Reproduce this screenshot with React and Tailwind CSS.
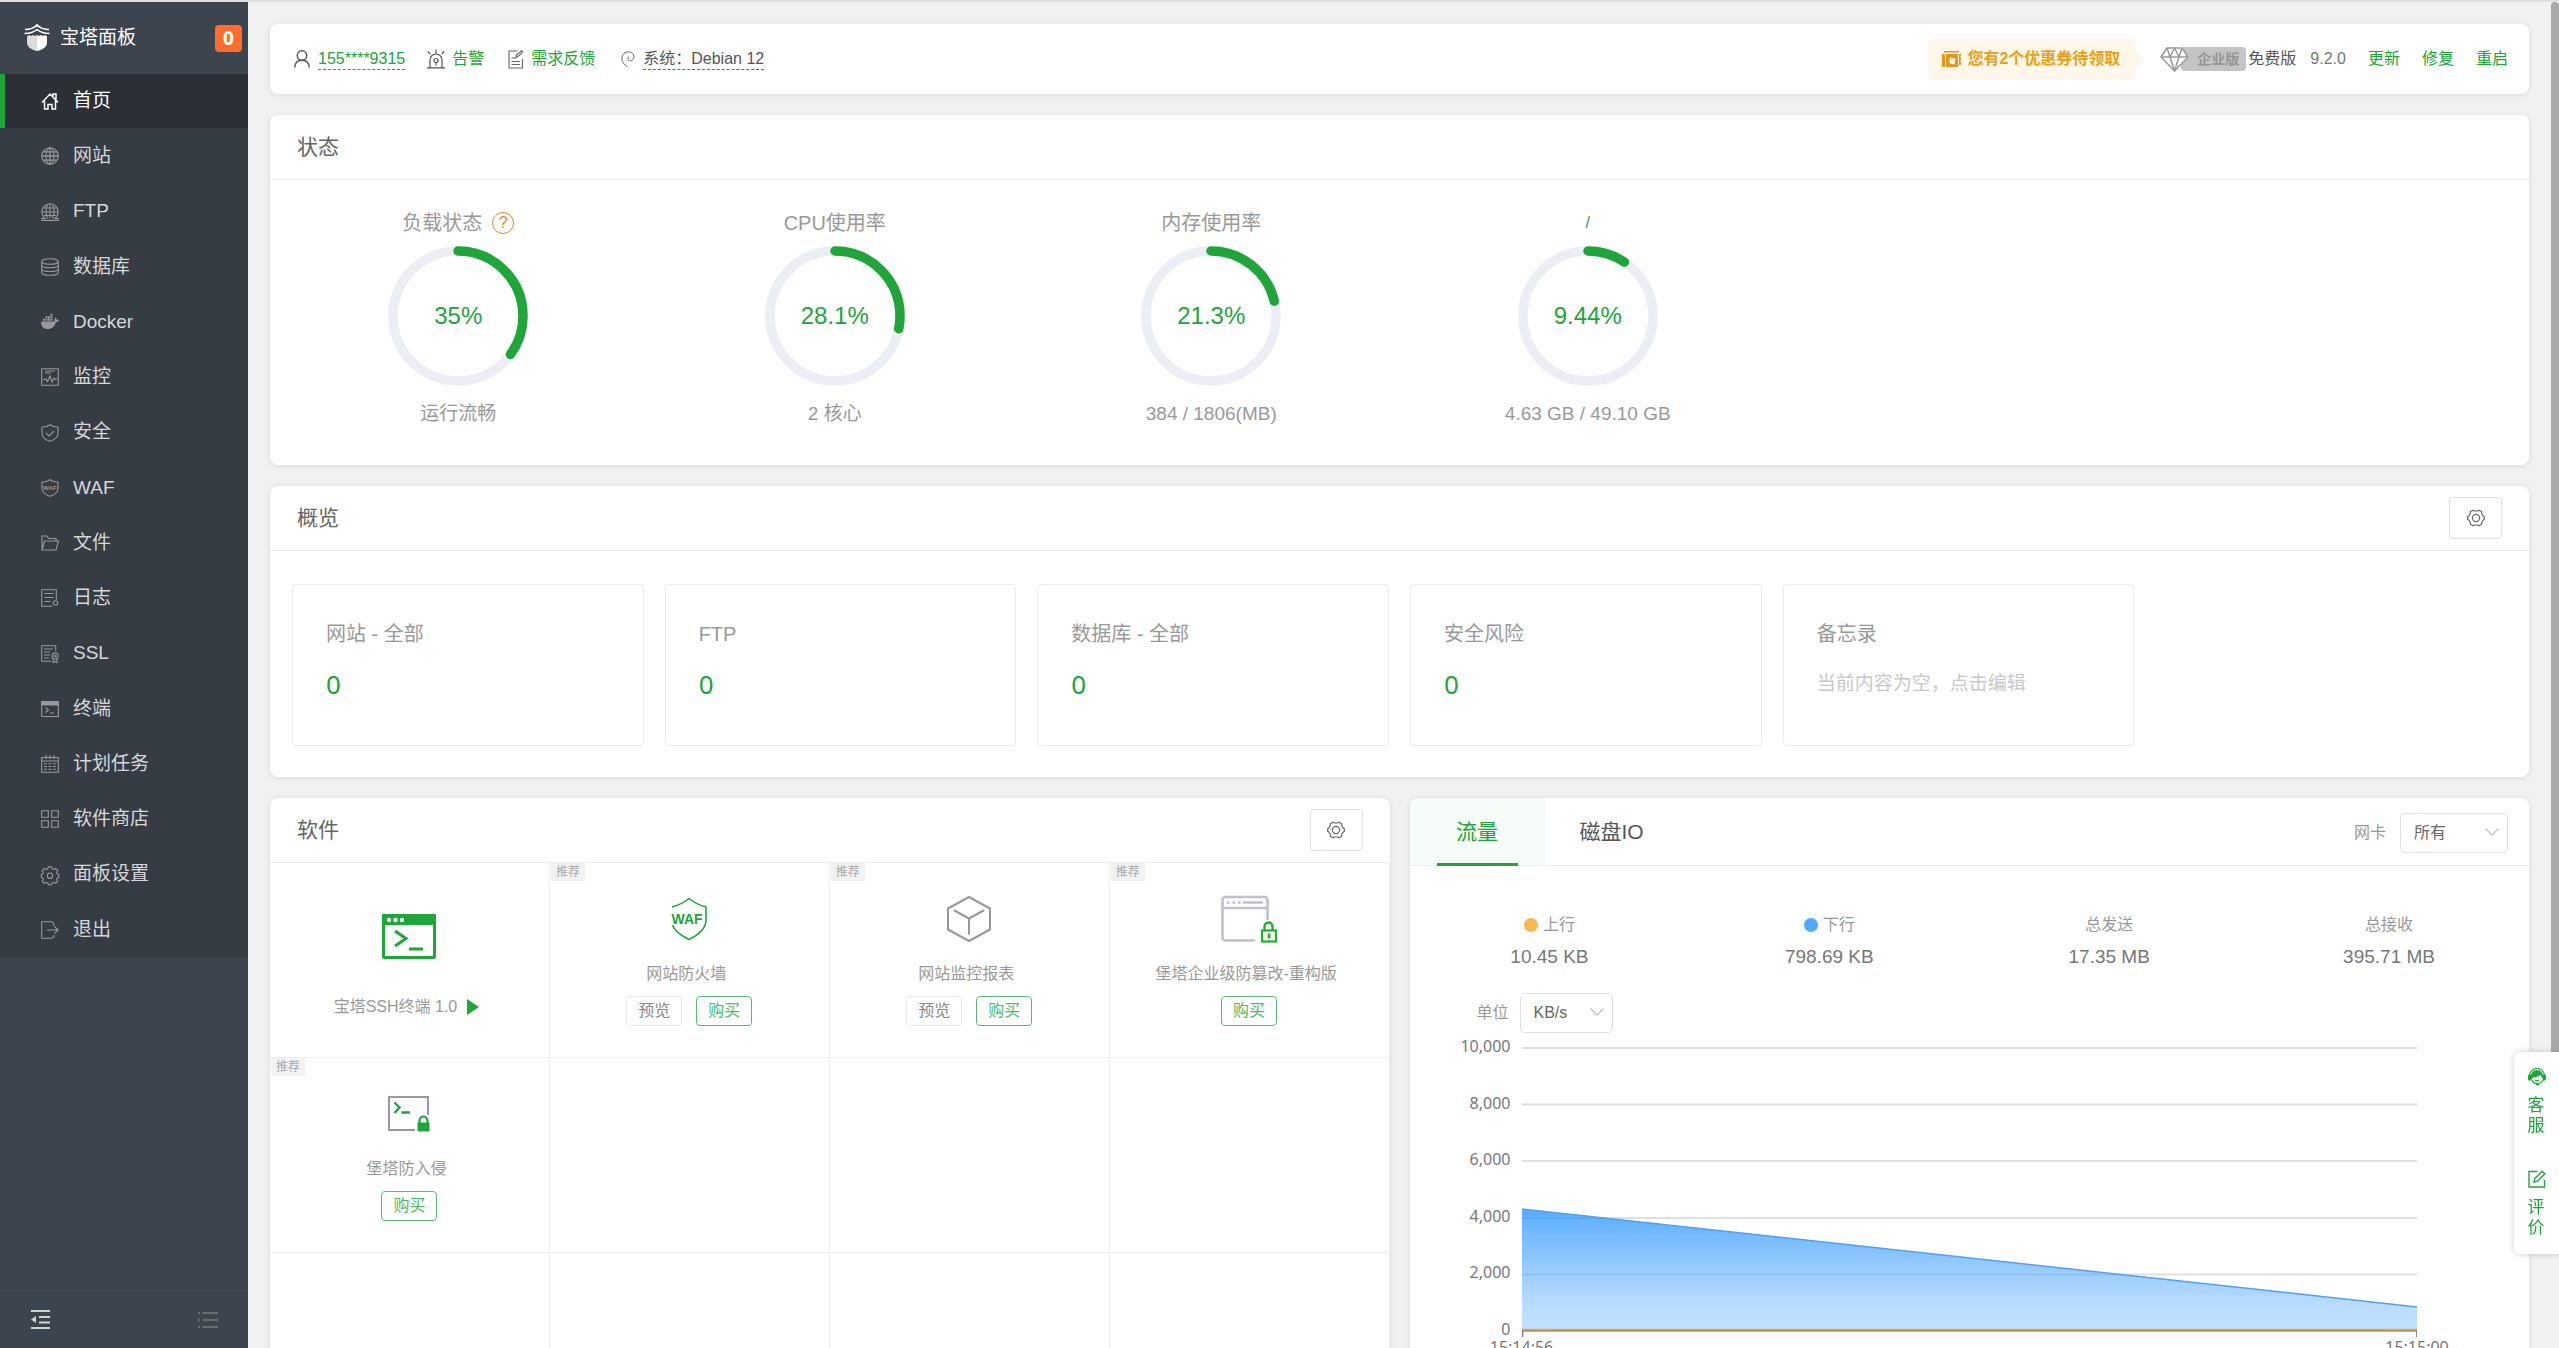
import React, { useState } from 'react';

const menuItems = [
  { key: 'home', label: '首页' },
  { key: 'site', label: '网站' },
  { key: 'ftp', label: 'FTP' },
  { key: 'database', label: '数据库' },
  { key: 'docker', label: 'Docker' },
  { key: 'monitor', label: '监控' },
  { key: 'security', label: '安全' },
  { key: 'waf', label: 'WAF' },
  { key: 'files', label: '文件' },
  { key: 'logs', label: '日志' },
  { key: 'ssl', label: 'SSL' },
  { key: 'terminal', label: '终端' },
  { key: 'crontab', label: '计划任务' },
  { key: 'store', label: '软件商店' },
  { key: 'config', label: '面板设置' },
  { key: 'exit', label: '退出' },
];

const gauges = [
  { title: '负载状态', value: 35, text: '35%', desc: '运行流畅', help: true },
  { title: 'CPU使用率', value: 28.1, text: '28.1%', desc: '2 核心' },
  { title: '内存使用率', value: 21.3, text: '21.3%', desc: '384 / 1806(MB)' },
  { title: '/', value: 9.44, text: '9.44%', desc: '4.63 GB / 49.10 GB', green: true },
];

const overview = [
  { title: '网站 - 全部', count: 0 },
  { title: 'FTP', count: 0 },
  { title: '数据库 - 全部', count: 0 },
  { title: '安全风险', count: 0 },
  { title: '备忘录', memo: '当前内容为空，点击编辑' },
];

const software = [
  { name: '宝塔SSH终端 1.0', icon: 'ssh', running: true },
  { name: '网站防火墙', icon: 'waf', badge: true, preview: true, buy: true },
  { name: '网站监控报表', icon: 'cube', badge: true, preview: true, buy: true },
  { name: '堡塔企业级防篡改-重构版', icon: 'tamper', badge: true, buy: true },
  { name: '堡塔防入侵', icon: 'intrusion', badge: true, buy: true },
];

const traffic = [
  { label: '上行', value: '10.45 KB', dot: 'bg-[#f7b851]' },
  { label: '下行', value: '798.69 KB', dot: 'bg-[#52a9ff]' },
  { label: '总发送', value: '17.35 MB' },
  { label: '总接收', value: '395.71 MB' },
];

const yLabels = ['10,000', '8,000', '6,000', '4,000', '2,000', '0'];

const menuPaths = {
  home: (
    <path d="M1 10.500 9 2l8 8.500M3.500 8.500V17H7v-4.500h4V17h3.500V8.500M12 4.500V2h3v5.500" strokeWidth="1.500" />
  ),
  site: (
    <>
      <circle cx="9" cy="9" r="8.300" />
      <ellipse cx="9" cy="9" rx="4" ry="8.300" />
      <path d="M9 .7v16.600M.7 9h16.600M2 4.800h14M2 13.200h14" strokeWidth="1.300" />
    </>
  ),
  ftp: (
    <>
      <path d="M4 15.500a8.200 8.200 0 1 1 10 0" />
      <path d="M6.500 15.200c-2-4-2-10 0-13.600M11.500 15.200c2-4 2-10 0-13.600M9 1v14M1 9h16M2.500 5h13M2.500 12.500h13M0 15.500h5M13 15.500h5M0 17.400h18" />
    </>
  ),
  database: (
    <>
      <ellipse cx="9" cy="3.500" rx="8.300" ry="2.800" />
      <path d="M.7 3.500v11c0 1.500 3.700 2.800 8.300 2.800s8.300-1.300 8.300-2.800v-11M.7 7c0 1.600 3.700 2.800 8.300 2.800S17.300 8.600 17.300 7M.7 10.700c0 1.600 3.700 2.800 8.300 2.800s8.300-1.200 8.300-2.800" />
    </>
  ),
  docker: (
    <path
      d="M0 8.500h12.500c.8 0 1.300-.6 1.200-1.500-.2-1 .1-1.800.7-2.500.8.6 1.200 1.300 1.200 2.200.8-.2 1.700 0 2.400.5-.5 1.200-1.500 1.800-3 1.800-1.300 4.500-4 7-8.500 7C2 16 0 13 0 8.500ZM2 5.800h2v2H2zM4.500 5.800h2v2h-2zM7 5.800h2v2H7zM9.500 5.800h2v2h-2zM4.500 3.300h2v2h-2zM7 3.300h2v2H7zM9.500.8h2v2h-2zM9.500 3.300h2v2h-2z"
      fill="currentColor"
      stroke="none"
    />
  ),
  monitor: (
    <path d="M.7.7h16.600v16.600H.7zM4 3h10M4 5h6M2 12l3-1 1.500 2.500L9 8l2 6 2-4 1 1.500 2-1" />
  ),
  security: (
    <path d="M9 .7C6.500 2.400 4 3 1 3.200V9c0 4 3 6.800 8 8.300 5-1.500 8-4.300 8-8.300V3.200C14 3 11.500 2.400 9 .7ZM5 9l3 3 5-5" />
  ),
  waf: (
    <>
      <path d="M9 .7C6.500 2.400 4 3 1 3.200V9c0 4 3 6.800 8 8.300 5-1.500 8-4.300 8-8.300V3.200C14 3 11.500 2.400 9 .7Z" />
      <text x="9" y="11" textAnchor="middle" fontSize="6" fontWeight="bold" fill="currentColor" stroke="none">
        WAF
      </text>
    </>
  ),
  files: <path d="M1 16V2h5l1.500 2.500H15V7M1 16 3.500 7h14L15 16Z" />,
  logs: (
    <>
      <path d="M11 17.300H.7V.7h14.600V11M3.500 4.500h9M3.500 8.500h9M3.500 12.500h6" />
      <circle cx="14.500" cy="14" r="2.200" />
    </>
  ),
  ssl: (
    <>
      <path d="M10 16.300H.7V.7h14V6M3 4h9M3 7h6M3 10h6M3 13h5M12 13.500V17.500l2-1 2 1v-4" />
      <circle cx="14" cy="11" r="3.200" />
      <circle cx="14" cy="11" r="1.200" />
    </>
  ),
  terminal: (
    <>
      <path d="M.7 1.500h16.600v15H.7zM4.500 7.500l3 2.500-3 2.500M9 13h4" />
      <path d="M.7 1.500h16.600v3.500H.7z" fill="currentColor" />
    </>
  ),
  crontab: (
    <path d="M.7 2.500h16.600v14.800H.7zM.7 6h16.600M5 0v4M9 0v4M13 0v4M3 8.800h3M7.500 8.800h3M12 8.800h3M3 11.500h3M7.500 11.500h3M12 11.500h3M3 14.300h3M7.500 14.300h3M12 14.300h3" />
  ),
  store: <path d="M.7.7h6.600v6.600H.7zM10.700.7h6.600v6.600h-6.600zM.7 10.700h6.600v6.600H.7zM10.700 10.700h6.600v6.600h-6.600z" />,
  config: (
    <>
      <path d="M7.400.8h3.200l.5 2 1.600.7 1.900-1.100 2.200 2.200-1.100 1.900.7 1.600 1.500.4v2.800l-1.500.4-.7 1.600 1.100 1.900-2.200 2.200-1.900-1.100-1.600.7-.5 1.700H7.400l-.5-1.700-1.600-.7-1.900 1.100-2.200-2.200 1.100-1.900-.7-1.600L.3 11.300V8.500l1.300-.4.700-1.600-1.100-1.900 2.200-2.200 1.900 1.100 1.600-.7Z" />
      <circle cx="9" cy="9.700" r="2.700" />
    </>
  ),
  exit: <path d="M13 5V3L11 .7H.7v16.600H11l2-1.500V14M6 9h11M13.500 5.500 17 9l-3.500 3.500" />,
};

const MenuIcon = ({ name }) => (
  <svg viewBox="0 0 18 18" className="h-[18px] w-[18px] shrink-0 overflow-visible" fill="none" stroke="currentColor" strokeWidth="1.100">
    {menuPaths[name]}
  </svg>
);

const Logo = () => (
  <svg viewBox="0 0 26 28" className="h-7 w-[26px]">
    <path d="M3 12.500 5 11l2 1 2-1 2 1 2-1v16C7 25.500 3 23 3 18.500Z" fill="#dcdcdc" />
    <path d="M23 12.500 21 11l-2 1-2-1-2 1-2-1v16c6-1.500 10-4 10-8.500Z" fill="#fff" />
    <path d="M1 5.500c5 0 9-1.500 12-4.500 3 3 7 4.500 12 4.500M.5 9.500c5.500 0 9.500-1.500 12.500-4 3 2.500 7 4 12.500 4M13 0v3" stroke="#fff" strokeWidth="1.600" fill="none" />
  </svg>
);

const GearIcon = () => (
  <svg viewBox="0 0 18 18" className="h-[18px] w-[18px]" fill="none" stroke="#666" strokeWidth="1.200" strokeLinejoin="round">
    <path d="M6 1.200 7.500 2h3l1.500-.8L14.500 2.500l.2 2 1.300 2.300 1.300.9v2.600l-1.300.9-1.300 2.300-.2 2-2.500 1.300-1.500-.8h-3l-1.500.8-2.500-1.300-.2-2L2 11.200l-1.300-.9V7.700L2 6.800l1.300-2.300.2-2Z" />
    <circle cx="9" cy="9" r="3.600" />
  </svg>
);

const SoftIcon = ({ name }) => {
  if (name === 'ssh') {
    return (
      <svg viewBox="0 0 54 45" className="h-[45px] w-[54px]">
        <rect x="1.500" y="1.500" width="51" height="42" rx="1" fill="#fff" stroke="#20a53a" strokeWidth="3" />
        <rect width="54" height="11" rx="1" fill="#20a53a" />
        <g fill="#fff">
          <circle cx="7" cy="6" r="2.200" />
          <circle cx="13.500" cy="6" r="2.200" />
          <circle cx="20" cy="6" r="2.200" />
        </g>
        <path d="m13 17 11 7.500L13 32M27 35h14" stroke="#20a53a" strokeWidth="3" fill="none" />
      </svg>
    );
  }
  if (name === 'waf') {
    return (
      <svg viewBox="0 0 38 44" className="h-11 w-[38px]" fill="none" stroke="#20a53a" strokeWidth="1.600">
        <path d="M2 10C8 8.500 14 5.500 19 1.500c5 4 11 7 17 8.500v13c0 8-8 15-17 19.500C11 38.500 4 33 2.500 28" />
        <text x="17" y="27" textAnchor="middle" fontSize="14" fontWeight="bold" fill="#20a53a" stroke="none">
          WAF
        </text>
      </svg>
    );
  }
  if (name === 'cube') {
    return (
      <svg viewBox="0 0 44 46" className="h-[46px] w-11" fill="none" stroke="#999" strokeWidth="2" strokeLinejoin="round" strokeLinecap="round">
        <path d="m22 1 21 11.500v21L22 45 1 33.500v-21ZM7.500 14.500 22 22.500l14.500-8M22 22.500V38" />
      </svg>
    );
  }
  if (name === 'tamper') {
    return (
      <svg viewBox="0 0 56 48" className="h-12 w-14" fill="none" stroke="#c1c0cd" strokeWidth="2.600">
        <path d="M34 45.500H4.500a3 3 0 0 1-3-3V5a3 3 0 0 1 3-3h39a3 3 0 0 1 3 3v20M1.500 13h45" />
        <path d="M6 7.500h2.500M11.500 7.500H14M17 7.500h2.500M22 7.500h20" />
        <path d="M43.500 35v-3.500a4 4 0 0 1 8 0V35" stroke="#1eb32b" strokeWidth="2.400" />
        <rect x="41" y="35.500" width="14" height="11" fill="#fff" stroke="#1eb32b" strokeWidth="2.200" />
        <path d="M48 38.500v5" stroke="#1eb32b" />
      </svg>
    );
  }
  return (
    <svg viewBox="0 0 42 36" className="h-9 w-[42px]" fill="none" stroke="#999" strokeWidth="2">
      <path d="M27 34H1V1h39v18" />
      <path d="m6.500 6.500 5 5-5 5.500M13.500 16.500H22" stroke="#20a53a" strokeWidth="2.400" />
      <path d="M31.500 27v-2.500a4 4 0 0 1 8 0V27" stroke="#20a53a" strokeWidth="2.200" />
      <rect x="29.500" y="26.500" width="12" height="9" rx="1" fill="#20a53a" stroke="none" />
    </svg>
  );
};

const Sidebar = () => (
  <aside className="flex w-[248px] shrink-0 flex-col bg-[#3c444d]">
    <div className="flex h-[72px] items-center pl-6 pr-[6px]">
      <Logo />
      <span className="ml-[10px] flex-1 text-[19px] text-white">宝塔面板</span>
      <span className="flex h-[27px] w-[27px] items-center justify-center rounded bg-[#ff6c2c] font-['Noto_Sans'] text-[19px] font-bold text-white">
        0
      </span>
    </div>
    <nav>
      <ul className="flex h-[883px] flex-col justify-between bg-[#353c43]">
        {menuItems.map((item, index) => (
          <li key={item.key}>
            <a
              href="#"
              className={
                index === 0
                  ? 'flex h-[54px] items-center gap-[14px] border-l-[5px] border-[#20a53a] bg-[#2c3036] pl-9 text-[19px] text-white'
                  : 'flex h-[54px] items-center gap-[14px] border-l-[5px] border-transparent pl-9 text-[19px] text-[#d5d7d9]'
              }
            >
              <span className={index === 0 ? 'text-white' : 'text-[#999]'}>
                <MenuIcon name={item.key} />
              </span>
              {item.label}
            </a>
          </li>
        ))}
      </ul>
    </nav>
    <div className="mt-auto flex h-[58px] items-center justify-between border-t border-[#42505a] pl-[31px] pr-[30px]">
      <button aria-label="收起菜单">
        <svg viewBox="0 0 19 19" className="h-[19px] w-[19px]" stroke="#d0d2d4" strokeWidth="2">
          <path d="M0 1h19M8 7h11M8 12.500h11M0 18h19" />
          <path d="M5 6v7L0 9.500Z" fill="#d0d2d4" stroke="none" />
        </svg>
      </button>
      <button aria-label="菜单列表">
        <svg viewBox="0 0 20 18" className="h-[18px] w-5" stroke="#6b6b6b" strokeWidth="2">
          <path d="M0 2h2M4.500 2H20M0 9h2M4.500 9H20M0 16h2M4.500 16H20" />
        </svg>
      </button>
    </div>
  </aside>
);

const TopBar = () => (
  <div className="flex h-[70px] shrink-0 items-center justify-between rounded-lg bg-white pl-6 pr-[21px] text-base shadow-[0_1px_6px_rgba(0,0,0,0.1)]">
    <div className="flex items-center text-[#555]">
      <svg viewBox="0 0 16 18" className="h-[18px] w-4" fill="none" stroke="#555" strokeWidth="1.500">
        <circle cx="8" cy="5.500" r="4.700" />
        <path d="M.8 17.500c.2-4.500 2.700-7.200 7.200-7.200s7 2.700 7.200 7.200" />
      </svg>
      <a href="#" className="ml-2 border-b border-dashed border-[#20a53a] leading-5 text-[#20a53a]">
        155****9315
      </a>
      <svg viewBox="0 0 18 20" className="ml-[22px] h-5 w-[18px]" fill="none" stroke="#555" strokeWidth="1.200">
        <path d="M3 18.500V11a6 6 0 0 1 12 0v7.500M0 18.800h18M9 4.500V.5M3 5 .8 2.500M15 5l2.200-2.500M9 13.500v3" />
        <circle cx="9" cy="11.500" r="2" />
      </svg>
      <a href="#" className="ml-[7px] text-[#20a53a]">
        告警
      </a>
      <svg viewBox="0 0 16 19" className="ml-6 h-[19px] w-4" fill="none" stroke="#666" strokeWidth="1.100">
        <path d="M9.500 1H1v17h13.500V9M3.500 8h5M3.500 11.500h8.500M3.500 14.500h8.500M8 7l.5-2L13.500.8l1.300 1.300L10 6.500Z" />
      </svg>
      <a href="#" className="ml-[7px] text-[#20a53a]">
        需求反馈
      </a>
      <svg viewBox="0 0 14 16" className="ml-[26px] h-4 w-[14px]" fill="none" stroke="#666" strokeWidth="1">
        <path d="M6.500 15.500C2.500 13.500.8 10.500 1 6.500 1.200 3 4 .8 7.500.8c3.300 0 5.500 2.200 5.500 5 0 2.300-1.600 3.900-3.600 3.900-1.600 0-2.600-1-2.600-2.300 0-.8.400-1.500 1.200-1.800" />
      </svg>
      <span className="ml-2 border-b border-dashed border-[#666] leading-5">系统：Debian 12</span>
    </div>

    <div className="flex items-center">
      <a href="#" className="relative flex h-[41px] items-center rounded-md bg-[#fff7e9] pl-[14px] pr-4 font-bold text-[#eda00f]">
        <svg viewBox="0 0 19 16" className="mr-[6px] h-4 w-[19px]" fill="#e2981c">
          <path d="M2 0h15v1.500H2zM17 3h2v2l-1 1 1 1v2l-1 1 1 1v3h-2zM0 3h2l1 1 1-1h12v13H0Z" />
          <path d="M3.500 3v13M8 7l5 1-1 5-4-1Z" stroke="#fff7e9" strokeWidth="1" fill="#fff7e9" />
        </svg>
        您有2个优惠券待领取
        <svg viewBox="0 0 9 16" className="absolute left-full top-[13px] h-4 w-[9px]" fill="#fff7e9">
          <path d="M0 0v16l9-8Z" />
        </svg>
      </a>
      <span className="ml-6 flex items-center">
        <svg viewBox="0 0 29 25" className="z-10 -mr-2 h-[25px] w-[29px]" fill="#fff" stroke="#999" strokeWidth="1.500" strokeLinejoin="round">
          <path d="M7 1h15l6 9-13.500 14L1 10Z" />
          <path d="M1 10h27M7 1l3 9 4.500 14L19 10l3-9M10 10l4.500-9L19 10" fill="none" />
        </svg>
        <span className="flex h-6 items-center rounded-sm bg-[#c4c4c4] pl-4 pr-[7px] text-sm font-bold text-[#979797]">
          企业版
        </span>
      </span>
      <span className="ml-[2px] text-[#555]">免费版</span>
      <span className="ml-[14px] text-[#777]">9.2.0</span>
      <div className="ml-[22px] flex gap-[22px] text-[#20a53a]">
        <a href="#">更新</a>
        <a href="#">修复</a>
        <a href="#">重启</a>
      </div>
    </div>
  </div>
);

const CardHeader = ({ title, gear }) => (
  <div className="flex h-[65px] items-center justify-between border-b border-[#ebebeb] px-[27px]">
    <h2 className="text-[21px] text-[#666]">{title}</h2>
    {gear && (
      <button aria-label="设置" className="flex h-[42px] w-[53px] items-center justify-center rounded border border-[#dcdfe6]">
        <GearIcon />
      </button>
    )}
  </div>
);

const Gauge = ({ data }) => {
  const length = 2 * Math.PI * 65;
  return (
    <div className="flex flex-col items-center">
      <div className="flex h-7 items-center gap-[10px] text-xl text-[#999]">
        {data.green ? <a href="#" className="text-base text-[#20a53a]">{data.title}</a> : data.title}
        {data.help && (
          <span className="flex h-[22px] w-[22px] items-center justify-center rounded-full border border-[#f0851e] text-base text-[#f0851e]">
            ?
          </span>
        )}
      </div>
      <div className="relative mt-[9px] h-[140px] w-[140px]">
        <svg viewBox="0 0 140 140" fill="none" strokeWidth="9.500">
          <circle cx="70" cy="70" r="65" stroke="#ebeef5" />
          <circle
            cx="70"
            cy="70"
            r="65"
            stroke="#20a53a"
            strokeLinecap="round"
            strokeDasharray={`${(length * data.value) / 100} ${length}`}
            transform="rotate(-90 70 70)"
          />
        </svg>
        <span className="absolute inset-0 flex items-center justify-center text-2xl text-[#20a53a]">{data.text}</span>
      </div>
      <div className="mt-[14px] text-[19px] leading-7 text-[#999]">{data.desc}</div>
    </div>
  );
};

const SoftCell = ({ item }) => (
  <div className="relative flex h-[195px] flex-col items-center border-b border-r border-[#ebeef5]">
    {item && item.badge && (
      <span className="absolute left-px top-0 h-[18px] bg-[#f2f2f2] px-[5px] text-xs leading-[18px] text-[#aaa]">推荐</span>
    )}
    {item && (
      <>
        <div className={item.running ? 'flex h-[130px] items-center pt-[16px]' : 'flex h-[97px] items-center pt-[14px]'}>
          <SoftIcon name={item.icon} />
        </div>
        <div className="flex items-center gap-[10px] pr-[6px] text-base leading-7 text-[#999]">
          {item.name}
          {item.running && (
            <svg viewBox="0 0 12 16" className="h-4 w-3" fill="#20a53a">
              <path d="M0 0v16l12-8Z" />
            </svg>
          )}
        </div>
        <div className="mt-2 flex gap-[14px]">
          {item.preview && (
            <button className="h-[30px] w-14 rounded border border-[#e6e6e6] text-base leading-7 text-[#888]">预览</button>
          )}
          {item.buy && (
            <button className="h-[30px] w-14 rounded border border-[#5fb878] text-base leading-7 text-[#4fb866]">购买</button>
          )}
        </div>
      </>
    )}
  </div>
);

const SelectBox = ({ id, label, options, className }) => (
  <div className="flex items-center text-base">
    <label htmlFor={id} className="text-[#999]">
      {label}
    </label>
    <div className={className}>
      <select id={id} className="h-10 w-full appearance-none rounded-[5px] border border-[#dcdfe6] bg-white pl-[13px] text-[#666] outline-none">
        {options.map((option) => (
          <option key={option}>{option}</option>
        ))}
      </select>
      <svg viewBox="0 0 14 8" className="pointer-events-none absolute right-[9px] top-[15px] h-2 w-[14px]" fill="none" stroke="#c0c4cc" strokeWidth="1.400">
        <path d="m.5.5 6.500 6.500 6.500-6.500" />
      </svg>
    </div>
  </div>
);

const TrafficChart = () => (
  <div className="mt-[3px] flex pr-28 font-['Noto_Sans'] text-base text-[#777]">
    <div className="flex h-[303px] w-[101px] shrink-0 flex-col justify-between text-right leading-5">
      {yLabels.map((label) => (
        <span key={label}>{label}</span>
      ))}
    </div>
    <div className="ml-[11px] flex-1 pt-[11px]">
      <svg viewBox="0 0 896 290" preserveAspectRatio="none" className="block h-[290px] w-full">
        <defs>
          <linearGradient id="down" x1="0" y1="0" x2="0" y2="1">
            <stop offset="0" stopColor="#1e90ff" stopOpacity="0.75" />
            <stop offset="0.8" stopColor="#52a9ff" stopOpacity="0.4" />
            <stop offset="1" stopColor="#52a9ff" stopOpacity="0.36" />
          </linearGradient>
        </defs>
        <path d="M0 1h896M0 57.500h896M0 114h896M0 171h896M0 227.500h896" stroke="#e0e0e0" strokeWidth="2" />
        <path d="M0 162 896 260v24H0Z" fill="url(#down)" />
        <path d="M0 162 896 260" stroke="#52a0ee" strokeWidth="1.500" />
        <path d="M0 283.500h896" stroke="#666" strokeWidth="2" />
        <path d="M0 283h896" stroke="#f7b851" strokeOpacity="0.5" strokeWidth="3" />
        <path d="M.7 284v6M895.300 284v6" stroke="#777" strokeWidth="1.300" />
      </svg>
      <div className="-mx-8 flex justify-between leading-5">
        <span className="w-16 text-center">15:14:56</span>
        <span className="w-16 text-center">15:15:00</span>
      </div>
    </div>
  </div>
);

const TrafficPanel = () => {
  const [tab, setTab] = useState('flow');
  return (
    <section className="overflow-hidden rounded-lg bg-white pb-5 shadow-[0_1px_6px_rgba(0,0,0,0.1)]">
      <div className="flex h-[68px] justify-between border-b border-[#ebebeb] pr-[21px]">
        <div className="flex text-[21px]">
          <button
            onClick={() => setTab('flow')}
            className={
              tab === 'flow'
                ? 'relative w-[135px] bg-[#f6fcf8] text-[#20a53a] after:absolute after:-bottom-px after:left-[27px] after:right-[27px] after:h-[3px] after:bg-[#20a53a]'
                : 'w-[135px] text-[#555]'
            }
          >
            流量
          </button>
          <button
            onClick={() => setTab('disk')}
            className={
              tab === 'disk'
                ? 'relative px-[35px] bg-[#f6fcf8] text-[#20a53a] after:absolute after:-bottom-px after:left-[27px] after:right-[27px] after:h-[3px] after:bg-[#20a53a]'
                : 'px-[35px] text-[#555]'
            }
          >
            磁盘IO
          </button>
        </div>
        <div className="flex items-center pt-[3px]">
          <SelectBox id="netcard" label="网卡" options={['所有']} className="relative ml-[14px] w-[108px]" />
        </div>
      </div>

      <div className="grid grid-cols-4 pt-[45px]">
        {traffic.map((item) => (
          <div key={item.label} className="text-center">
            <div className="flex items-center justify-center gap-[5px] text-base leading-7 text-[#999]">
              {item.dot && <i className={`h-[14px] w-[14px] rounded-full ${item.dot}`} />}
              {item.label}
            </div>
            <div className="mt-1 text-[19px] leading-7 text-[#777]">{item.value}</div>
          </div>
        ))}
      </div>

      <div className="mt-[22px] pl-[67px]">
        <SelectBox id="unit" label="单位" options={['KB/s', 'MB/s']} className="relative ml-[11px] w-[93px]" />
      </div>
      <TrafficChart />
    </section>
  );
};

const SideWidget = () => (
  <div className="fixed right-0 top-[1052px] flex w-[45px] flex-col items-center gap-[34px] rounded-l-md bg-white py-4 text-[17px] leading-5 text-[#20a53a] shadow-[0_0_6px_rgba(0,0,0,0.2)]">
    <a href="#" className="flex w-[18px] flex-col items-center gap-[10px]">
      <svg viewBox="0 0 18 18" className="h-[18px] w-[18px]">
        <path d="M1.500 8a7.500 7.500 0 0 1 15 0" fill="none" stroke="#20a53a" strokeWidth="1.200" />
        <rect y="6.500" width="3.500" height="6" rx="1.500" fill="#20a53a" />
        <rect x="14.500" y="6.500" width="3.500" height="6" rx="1.500" fill="#20a53a" />
        <path d="M3 10c-.5-5 2-8 6-8s6.500 3 6 8c-1-.5-2-1.500-2.500-3C10 9 6.500 9.500 5 9.500L3.500 12Z" fill="#20a53a" />
        <path d="M4 12c1 2.500 3 3.500 5 3.500 3 0 5-1.500 6-3.500M7 12c1.300 1 2.700 1 4 0M8 16.500h3" fill="none" stroke="#20a53a" strokeWidth="1.200" />
      </svg>
      客服
    </a>
    <a href="#" className="flex w-[18px] flex-col items-center gap-[10px]">
      <svg viewBox="0 0 18 18" className="h-[18px] w-[18px]" fill="none" stroke="#20a53a" strokeWidth="1.400">
        <path d="M9 1.500H1v15.500h15.500V10M6 12l.8-3.500L14 1.200l2.800 2.600-7.300 7.400Z" />
      </svg>
      评价
    </a>
  </div>
);

const App = () => {
  const cells = [...software, ...Array(7).fill(null)];
  return (
    <div className="flex h-screen overflow-hidden border-t-2 border-[#e0e0e0] bg-[#f1f1f1] font-['Liberation_Sans','Noto_Sans_CJK_SC',sans-serif]">
      <Sidebar />
      <main className="flex min-w-0 flex-1 flex-col gap-[21px] pl-[22px] pr-[30px] pt-[22px]">
        <TopBar />

        {/* 状态 */}
        <section className="shrink-0 rounded-lg bg-white pb-[37px] shadow-[0_1px_6px_rgba(0,0,0,0.1)]">
          <CardHeader title="状态" />
          <div className="grid grid-cols-6 pt-[29px]">
            {gauges.map((item) => (
              <Gauge key={item.title} data={item} />
            ))}
          </div>
        </section>

        {/* 概览 */}
        <section className="shrink-0 rounded-lg bg-white shadow-[0_1px_6px_rgba(0,0,0,0.1)]">
          <CardHeader title="概览" gear />
          <div className="grid grid-cols-6 gap-[21px] px-[22px] pb-[31px] pt-[33px]">
            {overview.map((item) => (
              <div key={item.title} className="h-[162px] rounded-sm border border-[#ebebeb] pl-[33px] pt-[34px]">
                <div className="text-xl leading-[30px] text-[#999]">{item.title}</div>
                {item.memo ? (
                  <div className="mt-5 text-[19px] leading-[30px] text-[#c8c8c8]">{item.memo}</div>
                ) : (
                  <a href="#" className="mt-5 block font-['Noto_Sans'] text-[26px] leading-[30px] text-[#20a53a]">
                    {item.count}
                  </a>
                )}
              </div>
            ))}
          </div>
        </section>

        <div className="grid shrink-0 grid-cols-2 items-start gap-5">
          {/* 软件 */}
          <section className="overflow-hidden rounded-lg bg-white shadow-[0_1px_6px_rgba(0,0,0,0.1)]">
            <CardHeader title="软件" gear />
            <div className="grid grid-cols-4">
              {cells.map((item, index) => (
                <SoftCell key={index} item={item} />
              ))}
            </div>
          </section>

          <TrafficPanel />
        </div>
      </main>

      <div className="fixed right-0 top-[2px] h-[1100px] w-2 rounded-t-full bg-[#a9a9a9]" />
      <SideWidget />
    </div>
  );
};

export default App;
